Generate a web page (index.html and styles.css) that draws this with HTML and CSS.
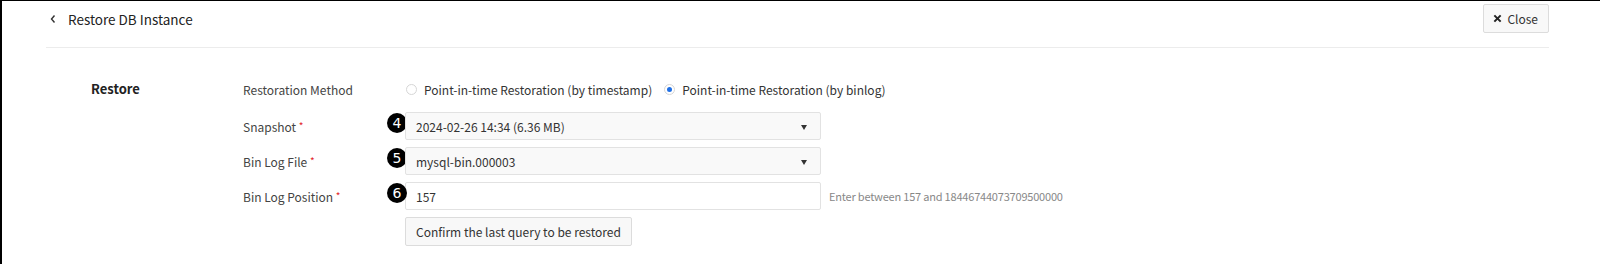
FILE: index.html
```html
<!DOCTYPE html>
<html lang="en">
<head>
  <meta charset="UTF-8" />
  <title>Restore DB Instance</title>
  <link rel="stylesheet" href="styles.css">
</head>
<body>
  <div class="page">

    <!-- Header -->
    <header class="page-header">
      <h1 class="page-title">
        <svg class="back-icon" viewBox="0 0 8 10" aria-hidden="true">
          <polyline points="5.5,1.5 2.5,5 5.5,8.5" fill="none" stroke="#333" stroke-width="1.4"/>
        </svg>
        Restore DB Instance
      </h1>
      <button class="btn btn-close">
        <svg class="close-icon" viewBox="0 0 10 10" aria-hidden="true">
          <path d="M1.5 1.5 L8.5 8.5 M8.5 1.5 L1.5 8.5" stroke="#222" stroke-width="2.2"/>
        </svg>
        Close
      </button>
    </header>

    <!-- Restore form -->
    <section class="form-section">
      <h2 class="section-title">Restore</h2>

      <div class="form-rows">
        <div class="form-row">
          <label class="form-label">Restoration Method</label>
          <div class="form-field radios">
            <label class="radio"><span class="radio-dot"></span>Point-in-time Restoration (by timestamp)</label>
            <label class="radio checked"><span class="radio-dot"></span>Point-in-time Restoration (by binlog)</label>
          </div>
        </div>

        <div class="form-row">
          <label class="form-label">Snapshot <span class="req">*</span></label>
          <div class="form-field">
            <span class="marker">4</span>
            <div class="select">2024-02-26 14:34 (6.36 MB)</div>
          </div>
        </div>

        <div class="form-row">
          <label class="form-label">Bin Log File <span class="req">*</span></label>
          <div class="form-field">
            <span class="marker">5</span>
            <div class="select">mysql-bin.000003</div>
          </div>
        </div>

        <div class="form-row">
          <label class="form-label">Bin Log Position <span class="req">*</span></label>
          <div class="form-field">
            <span class="marker">6</span>
            <input class="input" type="text" value="157" />
            <span class="hint">Enter between 157 and 18446744073709500000</span>
          </div>
        </div>

        <div class="form-row">
          <span class="form-label"></span>
          <div class="form-field">
            <button class="btn">Confirm the last query to be restored</button>
          </div>
        </div>
      </div>
    </section>

  </div>
</body>
</html>
```

FILE: styles.css
```css
/* Base */
html, body {
  margin: 0;
  padding: 0;
  height: 100%;
}

body {
  box-sizing: border-box;
  border-top: 1px solid #000;
  border-left: 2px solid #000;
  background: #fff;
  font-family: 'Noto Sans CJK KR', 'Noto Sans', sans-serif;
  font-size: 12px;
  color: #333;
}

.page {
  padding: 0 51px 0 44px;
}

/* Header */
.page-header {
  display: flex;
  align-items: center;
  justify-content: space-between;
  padding: 3px 0 14px 0;
  border-bottom: 1px solid #ececec;
}

.page-title {
  display: flex;
  align-items: center;
  margin: 0;
  font-size: 13.5px;
  font-weight: 400;
  color: #222;
}

.back-icon {
  width: 8px;
  height: 10px;
  margin: 0 11px 0 3px;
}

/* Buttons */
.btn {
  display: inline-flex;
  align-items: center;
  height: 29px;
  padding: 0 10px;
  box-sizing: border-box;
  background: #f8f8f8;
  border: 1px solid #dcdcdc;
  border-radius: 2px;
  font-family: inherit;
  font-size: 12px;
  color: #333;
}

.btn-close {
  padding: 0 10px 0 9px;
}

.close-icon {
  width: 9px;
  height: 9px;
  margin-right: 5px;
}

/* Form section */
.form-section {
  display: flex;
  padding: 27px 0 0 45px;
}

.section-title {
  width: 152px;
  margin: 0;
  font-size: 13px;
  font-weight: 700;
  line-height: 28px;
  color: #222;
}

.form-rows {
  display: flex;
  flex-direction: column;
  gap: 7px;
}

.form-row {
  display: flex;
  align-items: center;
  height: 28px;
}
.form-row:first-child {
  margin-bottom: 2px;
}

.form-label {
  width: 162px;
  color: #444;
}

.req {
  color: #e3262b;
  font-size: 10px;
  vertical-align: 2px;
}

.form-field {
  position: relative;
  display: flex;
  align-items: center;
  gap: 8px;
  height: 100%;
}

/* Radios */
.radios {
  gap: 11px;
}

.radio {
  display: flex;
  align-items: center;
  gap: 7px;
  color: #333;
}

.radio-dot {
  width: 11px;
  height: 11px;
  border: 1px solid #d6d6d6;
  border-radius: 50%;
  box-sizing: border-box;
  margin-left: 1px;
  position: relative;
}

.radio.checked .radio-dot::after {
  content: '';
  position: absolute;
  top: 2px;
  left: 2px;
  width: 5px;
  height: 5px;
  border-radius: 50%;
  background: #1f6fe5;
}

/* Select & input */
.select, .input {
  width: 416px;
  height: 28px;
  box-sizing: border-box;
  border: 1px solid #e2e2e2;
  border-radius: 2px;
  padding: 0 10px;
  font-family: inherit;
  font-size: 12px;
  color: #333;
}

.select {
  position: relative;
  display: flex;
  align-items: center;
  background: #f9f9f9;
}
.select::after {
  content: '';
  position: absolute;
  right: 13px;
  top: 12px;
  border-left: 3.5px solid transparent;
  border-right: 3.5px solid transparent;
  border-top: 5px solid #333;
}

.input {
  background: #fff;
  outline: none;
}

.hint {
  color: #888;
  font-size: 11px;
  letter-spacing: -0.2px;
}

/* Numbered markers over the fields */
.marker {
  position: absolute;
  left: -18px;
  top: 1px;
  width: 20px;
  height: 20px;
  border-radius: 50%;
  background: #000;
  color: #fff;
  font-family: 'DejaVu Sans', sans-serif;
  font-size: 14px;
  line-height: 20px;
  text-align: center;
}
```
